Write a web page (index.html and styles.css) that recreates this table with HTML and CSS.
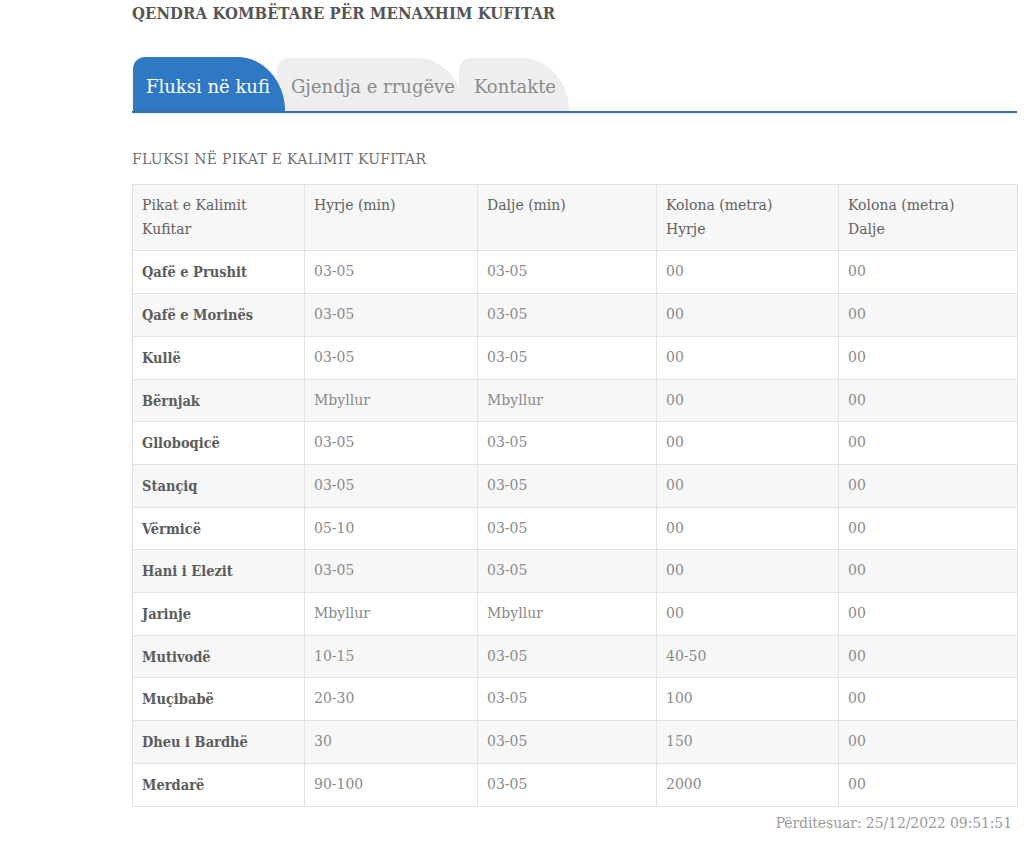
FILE: index.html
```html
<!DOCTYPE html>
<html lang="sq">
<head>
<meta charset="utf-8">
<title>Fluksi në kufi</title>
<link rel="stylesheet" href="styles.css">
</head>
<body>
<div class="page">
  <h1 class="site-title">QENDRA KOMBËTARE PËR MENAXHIM KUFITAR</h1>
  <nav class="tabs">
    <a class="tab tab-active">Fluksi në kufi</a>
    <a class="tab tab-2">Gjendja e rrugëve</a>
    <a class="tab tab-3">Kontakte</a>
  </nav>
  <h2 class="section-title">FLUKSI NË PIKAT E KALIMIT KUFITAR</h2>
  <table class="flux">
    <colgroup>
      <col class="c1"><col class="c2"><col class="c3"><col class="c4"><col class="c5">
    </colgroup>
    <thead>
      <tr><th>Pikat e Kalimit<br>Kufitar</th><th>Hyrje (min)</th><th>Dalje (min)</th><th>Kolona (metra)<br>Hyrje</th><th>Kolona (metra)<br>Dalje</th></tr>
    </thead>
    <tbody>
      <tr><td class="name">Qafë e Prushit</td><td>03-05</td><td>03-05</td><td>00</td><td>00</td></tr>
      <tr><td class="name">Qafë e Morinës</td><td>03-05</td><td>03-05</td><td>00</td><td>00</td></tr>
      <tr><td class="name">Kullë</td><td>03-05</td><td>03-05</td><td>00</td><td>00</td></tr>
      <tr><td class="name">Bërnjak</td><td>Mbyllur</td><td>Mbyllur</td><td>00</td><td>00</td></tr>
      <tr><td class="name">Glloboqicë</td><td>03-05</td><td>03-05</td><td>00</td><td>00</td></tr>
      <tr><td class="name">Stançiq</td><td>03-05</td><td>03-05</td><td>00</td><td>00</td></tr>
      <tr><td class="name">Vërmicë</td><td>05-10</td><td>03-05</td><td>00</td><td>00</td></tr>
      <tr><td class="name">Hani i Elezit</td><td>03-05</td><td>03-05</td><td>00</td><td>00</td></tr>
      <tr><td class="name">Jarinje</td><td>Mbyllur</td><td>Mbyllur</td><td>00</td><td>00</td></tr>
      <tr><td class="name">Mutivodë</td><td>10-15</td><td>03-05</td><td>40-50</td><td>00</td></tr>
      <tr><td class="name">Muçibabë</td><td>20-30</td><td>03-05</td><td>100</td><td>00</td></tr>
      <tr><td class="name">Dheu i Bardhë</td><td>30</td><td>03-05</td><td>150</td><td>00</td></tr>
      <tr><td class="name">Merdarë</td><td>90-100</td><td>03-05</td><td>2000</td><td>00</td></tr>
    </tbody>
  </table>
  <p class="updated">Përditesuar: 25/12/2022 09:51:51</p>
</div>
</body>
</html>
```

FILE: styles.css
```css
html, body {
  margin: 0;
  padding: 0;
  background: #ffffff;
}

body {
  font-family: "DejaVu Serif", "Liberation Serif", serif;
  color: #666666;
}

.page {
  margin-left: 132px;
  width: 885px;
  padding-top: 4px;
}

.site-title {
  margin: 0;
  font-family: "DejaVu Serif Condensed", "DejaVu Serif", serif;
  font-size: 16.5px;
  line-height: 20px;
  font-weight: bold;
  color: #555555;
  letter-spacing: 0.1px;
}

.tabs {
  margin-top: 33px;
  height: 54px;
  display: flex;
  align-items: flex-end;
  border-bottom: 2px solid #3f6f9f;
  box-shadow: 0 2px 2px -1px #d8ecf6;
}

.tab {
  position: relative;
  display: block;
  height: 53px;
  box-sizing: border-box;
  padding: 17px 9px 0 14px;
  font-size: 18px;
  line-height: 24px;
  color: #8a8a8a;
  background: #eeeeee;
  border-top-left-radius: 12px;
  border-top-right-radius: 48px 54px;
  white-space: nowrap;
}

.tab-active {
  height: 54px;
  padding-top: 18px;
  padding-left: 13px;
  padding-right: 15px;
  margin-left: 1px;
  background: #2f78c4;
  color: #ffffff;
  z-index: 3;
}

.tab-2 {
  margin-left: -8px;
  z-index: 2;
  padding-left: 14px;
  padding-right: 9px;
}

.tab-3 {
  margin-left: -5px;
  z-index: 1;
  padding-left: 15px;
  padding-right: 13px;
}

.section-title {
  margin: 38px 0 0 0;
  font-size: 14px;
  line-height: 16px;
  font-weight: normal;
  color: #6f6f6f;
  letter-spacing: 0.3px;
}

.flux {
  margin-top: 17px;
  width: 885px;
  table-layout: fixed;
  border-collapse: collapse;
  font-size: 14px;
  line-height: 23.7px;
}

.c1 { width: 172px; }
.c2 { width: 173px; }
.c3 { width: 179px; }
.c4 { width: 182px; }
.c5 { width: 179px; }

.flux th,
.flux td {
  border: 1px solid #e2e2e2;
  padding: 9px 8px 9px 9px;
  text-align: left;
  vertical-align: top;
  font-weight: normal;
}

.flux thead th {
  background: #f7f7f7;
  color: #626262;
}

.flux tbody tr:nth-child(even) td {
  background: #f7f7f7;
}

.flux td {
  color: #8a8a8a;
}

.flux td.name {
  font-family: "DejaVu Serif Condensed", "DejaVu Serif", serif;
  font-size: 14.5px;
  font-weight: bold;
  color: #5c5c5c;
}

.updated {
  margin: 6px 0 0 0;
  padding-right: 5px;
  text-align: right;
  font-size: 14px;
  line-height: 20px;
  color: #9a9a9a;
  letter-spacing: -0.1px;
}
```
